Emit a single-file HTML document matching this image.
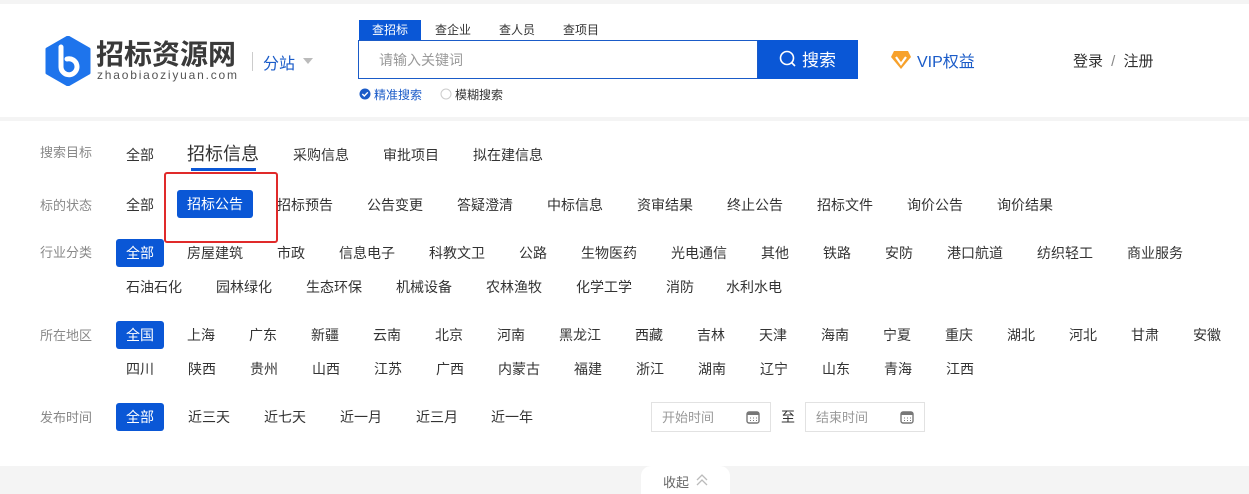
<!DOCTYPE html>
<html><head><meta charset="utf-8"><style>
*{margin:0;padding:0;box-sizing:border-box}
body{width:1249px;height:494px;background:#f4f4f4;font-family:"Liberation Sans","Noto Sans CJK SC",sans-serif;position:relative;overflow:hidden;color:#333}
.a{position:absolute;white-space:nowrap}
.t{position:absolute;white-space:nowrap;font-size:14px;line-height:20px;color:#333}
.l{position:absolute;font-size:13px;line-height:20px;color:#888;left:40px}
.b{position:absolute;background:#0a57d6;color:#fff;border-radius:3px;font-size:14px;line-height:28px;text-align:center}
</style></head><body>
<div class="a" style="left:0;top:4px;width:1249px;height:113px;background:#fff"></div>
<div class="a" style="left:0;top:121px;width:1249px;height:345px;background:#fff"></div>
<svg class="a" style="left:45px;top:36px" width="46" height="50" viewBox="0 0 46 50"><polygon points="23,1 44,13 44,37 23,49 2,37 2,13" fill="#1e74ec" stroke="#1e74ec" stroke-width="3" stroke-linejoin="round"/><path d="M16 11 V31 A8 8 0 1 0 22 23" fill="none" stroke="#fff" stroke-width="5" stroke-linecap="round"/></svg>
<div class="a" style="left:96px;top:33px;font-size:28px;font-weight:bold;color:#3a3a3a;letter-spacing:0">招标资源网</div>
<div class="a" style="left:97px;top:68px;font-size:12px;color:#555;letter-spacing:1.8px">zhaobiaoziyuan.com</div>
<div class="a" style="left:252px;top:52px;width:1px;height:19px;background:#ccc"></div>
<div class="a" style="left:263px;top:50px;font-size:16px;color:#1a5bc8">分站</div>
<div class="a" style="left:303px;top:58px;border:5px solid transparent;border-top:6px solid #bbb"></div>
<div class="a" style="left:359px;top:20px;width:62px;height:20px;background:#0a57d6;color:#fff;font-size:12px;line-height:20px;text-align:center">查招标</div>
<div class="a" style="left:435px;top:21px;font-size:12px">查企业</div>
<div class="a" style="left:499px;top:21px;font-size:12px">查人员</div>
<div class="a" style="left:563px;top:21px;font-size:12px">查项目</div>
<div class="a" style="left:358px;top:40px;width:400px;height:39px;border:1px solid #1a5bc8;background:#fff"></div>
<div class="a" style="left:379px;top:50px;font-size:14px;color:#999">请输入关键词</div>
<div class="a" style="left:758px;top:40px;width:100px;height:39px;background:#0a57d6"></div>
<svg class="a" style="left:778px;top:49px" width="20" height="20" viewBox="0 0 20 20"><circle cx="9" cy="9" r="6.5" fill="none" stroke="#fff" stroke-width="1.6"/><path d="M13.5 13.5 L17 17" stroke="#fff" stroke-width="1.6"/></svg>
<div class="a" style="left:802px;top:46px;font-size:17px;color:#fff">搜索</div>
<svg class="a" style="left:890px;top:50px" width="22" height="20" viewBox="0 0 22 20"><polygon points="4,1 18,1 21,7 11,19 1,7" fill="#f7a12b"/><path d="M6 7 L11 14 L16 7" fill="none" stroke="#fff" stroke-width="2.2"/></svg>
<div class="a" style="left:917px;top:48px;font-size:16px;color:#1a5bc8">VIP权益</div>
<div class="a" style="left:1073px;top:50px;font-size:15px;color:#333">登录 <span style="color:#888;margin:0 4px">/</span> 注册</div>
<svg class="a" style="left:359px;top:88px" width="12" height="12"><circle cx="6" cy="6" r="5.5" fill="#1a5bc8"/><path d="M3.3 6 L5.3 8 L8.8 4.3" fill="none" stroke="#fff" stroke-width="1.4"/></svg>
<div class="a" style="left:374px;top:86px;font-size:12px;color:#1a5bc8">精准搜索</div>
<svg class="a" style="left:440px;top:88px" width="12" height="12"><circle cx="6" cy="6" r="5" fill="#fff" stroke="#ccc"/></svg>
<div class="a" style="left:455px;top:86px;font-size:12px;color:#333">模糊搜索</div>

<div class="l" style="top:143px">搜索目标</div>
<div class="t" style="left:126px;top:145px">全部</div>
<div class="a" style="left:187px;top:142px;font-size:18px;line-height:24px">招标信息</div>
<div class="a" style="left:191px;top:168px;width:65px;height:3px;background:#0a57d6"></div>
<div class="t" style="left:293px;top:145px">采购信息</div>
<div class="t" style="left:383px;top:145px">审批项目</div>
<div class="t" style="left:473px;top:145px">拟在建信息</div>

<div class="l" style="top:196px">标的状态</div>
<div class="t" style="left:126px;top:195px">全部</div>
<div class="b" style="left:177px;top:190px;width:76px">招标公告</div>
<div class="t" style="left:277px;top:195px">招标预告</div>
<div class="t" style="left:367px;top:195px">公告变更</div>
<div class="t" style="left:457px;top:195px">答疑澄清</div>
<div class="t" style="left:547px;top:195px">中标信息</div>
<div class="t" style="left:637px;top:195px">资审结果</div>
<div class="t" style="left:727px;top:195px">终止公告</div>
<div class="t" style="left:817px;top:195px">招标文件</div>
<div class="t" style="left:907px;top:195px">询价公告</div>
<div class="t" style="left:997px;top:195px">询价结果</div>
<div class="a" style="left:164px;top:172px;width:114px;height:71px;border:2px solid #e02a2a;border-radius:3px"></div>

<div class="l" style="top:243px">行业分类</div>
<div class="b" style="left:116px;top:239px;width:48px">全部</div>
<div class="t" style="left:187px;top:243px">房屋建筑</div>
<div class="t" style="left:277px;top:243px">市政</div>
<div class="t" style="left:339px;top:243px">信息电子</div>
<div class="t" style="left:429px;top:243px">科教文卫</div>
<div class="t" style="left:519px;top:243px">公路</div>
<div class="t" style="left:581px;top:243px">生物医药</div>
<div class="t" style="left:671px;top:243px">光电通信</div>
<div class="t" style="left:761px;top:243px">其他</div>
<div class="t" style="left:823px;top:243px">铁路</div>
<div class="t" style="left:885px;top:243px">安防</div>
<div class="t" style="left:947px;top:243px">港口航道</div>
<div class="t" style="left:1037px;top:243px">纺织轻工</div>
<div class="t" style="left:1127px;top:243px">商业服务</div>
<div class="t" style="left:126px;top:277px">石油石化</div>
<div class="t" style="left:216px;top:277px">园林绿化</div>
<div class="t" style="left:306px;top:277px">生态环保</div>
<div class="t" style="left:396px;top:277px">机械设备</div>
<div class="t" style="left:486px;top:277px">农林渔牧</div>
<div class="t" style="left:576px;top:277px">化学工学</div>
<div class="t" style="left:666px;top:277px">消防</div>
<div class="t" style="left:726px;top:277px">水利水电</div>

<div class="l" style="top:326px">所在地区</div>
<div class="b" style="left:116px;top:321px;width:48px">全国</div>
<div class="t" style="left:187px;top:325px">上海</div>
<div class="t" style="left:249px;top:325px">广东</div>
<div class="t" style="left:311px;top:325px">新疆</div>
<div class="t" style="left:373px;top:325px">云南</div>
<div class="t" style="left:435px;top:325px">北京</div>
<div class="t" style="left:497px;top:325px">河南</div>
<div class="t" style="left:559px;top:325px">黑龙江</div>
<div class="t" style="left:635px;top:325px">西藏</div>
<div class="t" style="left:697px;top:325px">吉林</div>
<div class="t" style="left:759px;top:325px">天津</div>
<div class="t" style="left:821px;top:325px">海南</div>
<div class="t" style="left:883px;top:325px">宁夏</div>
<div class="t" style="left:945px;top:325px">重庆</div>
<div class="t" style="left:1007px;top:325px">湖北</div>
<div class="t" style="left:1069px;top:325px">河北</div>
<div class="t" style="left:1131px;top:325px">甘肃</div>
<div class="t" style="left:1193px;top:325px">安徽</div>
<div class="t" style="left:126px;top:359px">四川</div>
<div class="t" style="left:188px;top:359px">陕西</div>
<div class="t" style="left:250px;top:359px">贵州</div>
<div class="t" style="left:312px;top:359px">山西</div>
<div class="t" style="left:374px;top:359px">江苏</div>
<div class="t" style="left:436px;top:359px">广西</div>
<div class="t" style="left:498px;top:359px">内蒙古</div>
<div class="t" style="left:574px;top:359px">福建</div>
<div class="t" style="left:636px;top:359px">浙江</div>
<div class="t" style="left:698px;top:359px">湖南</div>
<div class="t" style="left:760px;top:359px">辽宁</div>
<div class="t" style="left:822px;top:359px">山东</div>
<div class="t" style="left:884px;top:359px">青海</div>
<div class="t" style="left:946px;top:359px">江西</div>

<div class="l" style="top:408px">发布时间</div>
<div class="b" style="left:116px;top:403px;width:48px">全部</div>
<div class="t" style="left:188px;top:407px">近三天</div>
<div class="t" style="left:264px;top:407px">近七天</div>
<div class="t" style="left:340px;top:407px">近一月</div>
<div class="t" style="left:416px;top:407px">近三月</div>
<div class="t" style="left:491px;top:407px">近一年</div>
<div class="a" style="left:651px;top:402px;width:120px;height:30px;border:1px solid #e2e2e2"></div>
<div class="a" style="left:662px;top:407px;font-size:13px;color:#999">开始时间</div>
<div class="t" style="left:781px;top:407px">至</div>
<div class="a" style="left:805px;top:402px;width:120px;height:30px;border:1px solid #e2e2e2"></div>
<div class="a" style="left:816px;top:407px;font-size:13px;color:#999">结束时间</div>
<svg class="a" style="left:746px;top:410px" width="14" height="14" viewBox="0 0 14 14"><rect x="1" y="2" width="12" height="11" rx="2" fill="none" stroke="#777" stroke-width="1.4"/><rect x="1" y="2" width="12" height="3" fill="#777"/><path d="M4 8h1M7 8h1M10 8h1M4 10.5h1M7 10.5h1M10 10.5h1" stroke="#777"/></svg>
<svg class="a" style="left:900px;top:410px" width="14" height="14" viewBox="0 0 14 14"><rect x="1" y="2" width="12" height="11" rx="2" fill="none" stroke="#777" stroke-width="1.4"/><rect x="1" y="2" width="12" height="3" fill="#777"/><path d="M4 8h1M7 8h1M10 8h1M4 10.5h1M7 10.5h1M10 10.5h1" stroke="#777"/></svg>

<div class="a" style="left:641px;top:466px;width:89px;height:28px;background:#fff;border-radius:10px 10px 0 0"></div>
<div class="a" style="left:663px;top:472px;font-size:13px;color:#666">收起</div>
<svg class="a" style="left:695px;top:473px" width="14" height="14" viewBox="0 0 14 14"><path d="M2 7 L7 2 L12 7 M2 12 L7 7 L12 12" fill="none" stroke="#bbb" stroke-width="1.3"/></svg>
</body></html>
